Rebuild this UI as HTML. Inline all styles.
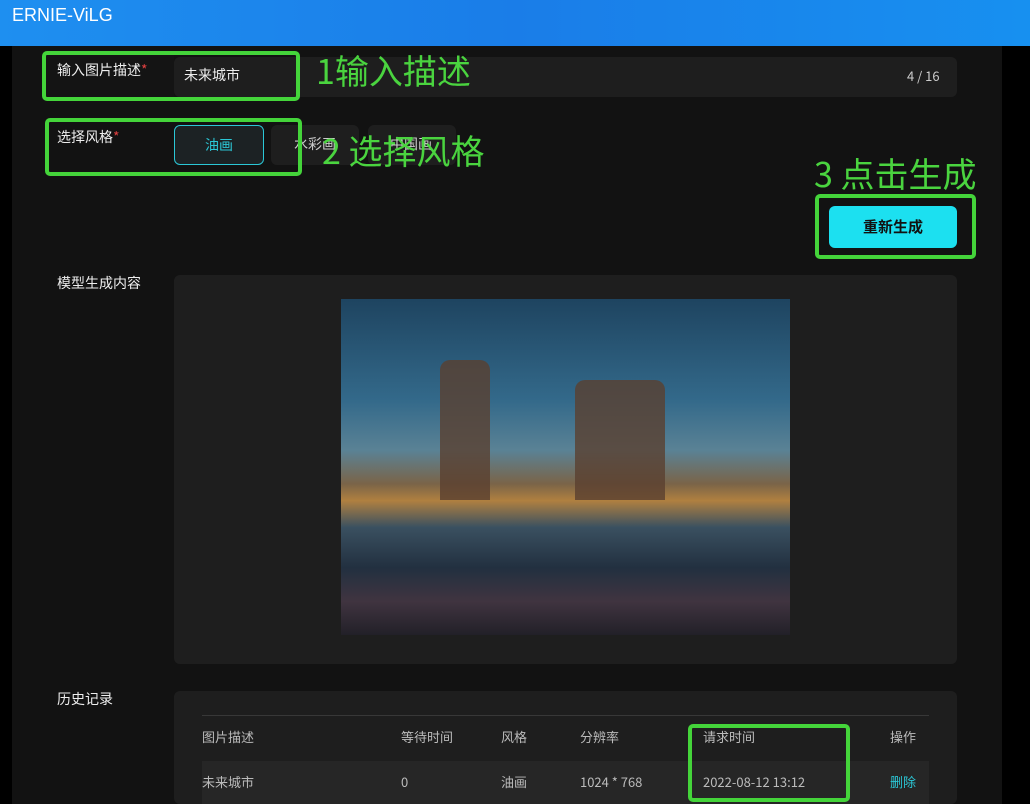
<!DOCTYPE html>
<html><head><meta charset="utf-8"><style>
body{margin:0;width:1030px;height:804px;overflow:hidden;background:#000;font-family:"Liberation Sans","Noto Sans CJK SC",sans-serif;position:relative;color:#ddd}
.a{position:absolute;line-height:1.2}
.hdr{left:0;top:0;width:1030px;height:46px;background:linear-gradient(90deg,#1e8ff0,#1a7de8 50%,#1790f0);}
.main{left:12px;top:46px;width:990px;height:758px;background:#121212}
.box{background:#1e1e1e;border-radius:6px}
.g{border:4px solid #44d43a;border-radius:5px}
.gt{color:#4ad43f;font-size:34px;font-family:"Noto Sans CJK SC",sans-serif}
.lbl{font-size:14px;color:#eee;font-family:"Noto Sans CJK SC",sans-serif}
.s{color:#e04040}
.t{font-size:13px;color:#bbb;font-family:"Noto Sans CJK SC",sans-serif}
</style></head><body>
<div class="a hdr"></div>
<div class="a" style="left:12px;top:5px;font-size:18px;color:#fff">ERNIE-ViLG</div>
<div class="a main"></div>
<div class="a box" style="left:174px;top:57px;width:783px;height:40px"></div>
<div class="a" style="left:44px;top:52px;width:130px;height:48px;background:#141414"></div>
<div class="a t" style="left:907px;top:68px;color:#ccc">4 / 16</div>
<div class="a lbl" style="left:57px;top:62px">输入图片描述<span class="s">*</span></div>
<div class="a lbl" style="left:184px;top:67px">未来城市</div>
<div class="a g" style="left:42px;top:51px;width:250px;height:42px"></div>
<div class="a gt" style="left:316px;top:50px">1输入描述</div>
<div class="a lbl" style="left:57px;top:129px">选择风格<span class="s">*</span></div>
<div class="a" style="left:174px;top:125px;width:88px;height:38px;border:1px solid #2bc7d6;border-radius:6px;background:#1c2224;color:#2bc7d6;font-size:14px;text-align:center;line-height:38px;font-family:'Noto Sans CJK SC',sans-serif">油画</div>
<div class="a box" style="left:271px;top:125px;width:88px;height:40px"></div>
<div class="a box" style="left:368px;top:125px;width:88px;height:40px"></div>
<div class="a lbl" style="left:294px;top:136px;color:#ccc">水彩画</div>
<div class="a lbl" style="left:390px;top:136px;color:#ccc">中国画</div>
<div class="a g" style="left:45px;top:118px;width:249px;height:50px"></div>
<div class="a gt" style="left:322px;top:130px">2 选择风格</div>
<div class="a gt" style="left:814px;top:153px">3 点击生成</div>
<div class="a g" style="left:815px;top:194px;width:153px;height:57px"></div>
<div class="a" style="left:829px;top:206px;width:128px;height:42px;background:#1ce0f0;border-radius:6px;color:#111;font-weight:bold;font-size:15px;text-align:center;line-height:42px;font-family:'Noto Sans CJK SC',sans-serif">重新生成</div>
<div class="a lbl" style="left:57px;top:275px">模型生成内容</div>
<div class="a box" style="left:174px;top:275px;width:783px;height:389px"></div>
<div class="a" style="left:341px;top:299px;width:449px;height:336px;background:linear-gradient(180deg,#1e4460 0%,#33698a 30%,#5a8295 45%,#7a6448 55%,#b08040 60%,#3a5060 68%,#223040 80%,#403440 90%,#222028 100%)"></div>
<div class="a" style="left:440px;top:360px;width:50px;height:140px;background:#5a4030;opacity:.8;border-radius:10px 10px 0 0"></div>
<div class="a" style="left:575px;top:380px;width:90px;height:120px;background:#5a4030;opacity:.8;border-radius:10px 10px 0 0"></div>
<div class="a lbl" style="left:57px;top:691px">历史记录</div>
<div class="a box" style="left:174px;top:691px;width:783px;height:113px"></div>
<div class="a" style="left:202px;top:715px;width:727px;height:1px;background:#383838"></div>
<div class="a" style="left:202px;top:761px;width:727px;height:43px;background:#262626"></div>
<div class="a t" style="left:202px;top:729px">图片描述</div>
<div class="a t" style="left:401px;top:729px">等待时间</div>
<div class="a t" style="left:501px;top:729px">风格</div>
<div class="a t" style="left:580px;top:729px">分辨率</div>
<div class="a t" style="left:703px;top:729px">请求时间</div>
<div class="a t" style="left:890px;top:729px">操作</div>
<div class="a t" style="left:202px;top:774px">未来城市</div>
<div class="a t" style="left:401px;top:774px">0</div>
<div class="a t" style="left:501px;top:774px">油画</div>
<div class="a t" style="left:580px;top:774px">1024 * 768</div>
<div class="a t" style="left:703px;top:774px">2022-08-12 13:12</div>
<div class="a t" style="left:890px;top:774px;color:#2bc7d6">删除</div>
<div class="a g" style="left:688px;top:724px;width:154px;height:70px"></div>
</body></html>
